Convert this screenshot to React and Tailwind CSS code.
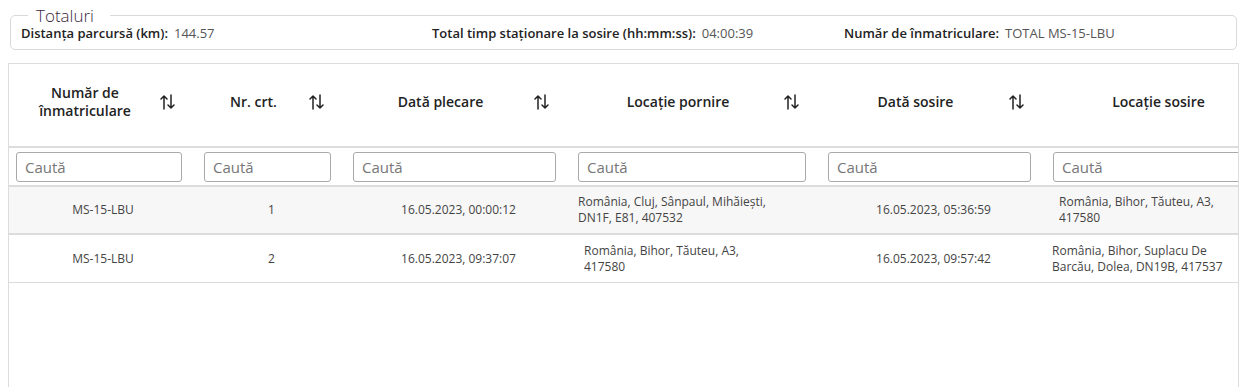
import React from "react";

const columns = [
  { label: "Număr de înmatriculare", width: "w-[188px]", sortable: true },
  { label: "Nr. crt.", width: "w-[149px]", sortable: true },
  { label: "Dată plecare", width: "w-[225px]", sortable: true },
  { label: "Locație pornire", width: "w-[250px]", sortable: true },
  { label: "Dată sosire", width: "w-[225px]", sortable: true },
  { label: "Locație sosire", width: "w-[225px]", sortable: false },
];

const rows = [
  {
    plate: "MS-15-LBU",
    nr: "1",
    start: "16.05.2023, 00:00:12",
    from: "România, Cluj, Sânpaul, Mihăiești, DN1F, E81, 407532",
    fromPad: "pl-[7px]",
    end: "16.05.2023, 05:36:59",
    to: "România, Bihor, Tăuteu, A3, 417580",
    toPad: "pl-[13px]",
  },
  {
    plate: "MS-15-LBU",
    nr: "2",
    start: "16.05.2023, 09:37:07",
    from: "România, Bihor, Tăuteu, A3, 417580",
    fromPad: "pl-[13px]",
    end: "16.05.2023, 09:57:42",
    to: "România, Bihor, Suplacu De Barcău, Dolea, DN19B, 417537",
    toPad: "pl-[6px]",
  },
];

const SortIcon = () => (
  <svg width="15" height="16" viewBox="0 0 15 16" fill="none" stroke="#222" strokeWidth="1.5" strokeLinecap="round" strokeLinejoin="round">
    <path d="M4 15V2M1 5l3-3 3 3" />
    <path d="M11 1v13M8 11l3 3 3-3" />
  </svg>
);

const Totals = () => (
  <fieldset className="mx-[10px] mt-[7px] rounded-[5px] border border-[#d9d9d9] px-[10px] pb-[7px] pt-0">
    <legend className="ml-[7px] pl-[8px] pr-[16px] text-[17px] font-light leading-[17px] text-[#3d1f40]">Totaluri</legend>
    <div className="grid grid-cols-[411px_412px_1fr] pt-[1px] text-[13px] leading-[17px]">
      <div>
        <span className="font-semibold text-[#222]">Distanța parcursă (km):</span>
        <span className="ml-[6px] text-[#555]">144.57</span>
      </div>
      <div>
        <span className="font-semibold text-[#222]">Total timp staționare la sosire (hh:mm:ss):</span>
        <span className="ml-[6px] text-[#555]">04:00:39</span>
      </div>
      <div>
        <span className="font-semibold text-[#222]">Număr de înmatriculare:</span>
        <span className="ml-[6px] text-[#555]">TOTAL MS-15-LBU</span>
      </div>
    </div>
  </fieldset>
);

const Cell = ({ width, children, className = "" }) => (
  <div className={`${width} shrink-0 px-[7px] ${className}`}>{children}</div>
);

export default function App() {
  return (
    <div className="h-[387px] overflow-hidden bg-white font-['Open_Sans',sans-serif] text-[#333]">
      <Totals />

      <div className="mx-[8px] mt-[13px] h-[400px] overflow-hidden border border-[#dcdcdc] bg-white">
        {/* header */}
        <div className="flex h-[84px] items-center border-b-2 border-[#dcdcdc] pb-[6px]">
          {columns.map((col) => (
            <Cell key={col.label} width={col.width} className="flex items-center">
              <span className="flex-1 text-center text-[14px] font-semibold leading-[18px] text-[#222]">
                {col.label === "Număr de înmatriculare" ? (
                  <>
                    Număr de
                    <br />
                    înmatriculare
                  </>
                ) : (
                  col.label
                )}
              </span>
              {col.sortable && (
                <span className="mr-[15px] ml-[6px]">
                  <SortIcon />
                </span>
              )}
            </Cell>
          ))}
        </div>

        {/* filters */}
        <div className="flex h-[39px] items-center border-b-2 border-[#dcdcdc]">
          {columns.map((col) => (
            <Cell key={col.label} width={col.width} className="pr-[15px]">
              <input
                type="text"
                placeholder="Caută"
                className="h-[30px] w-full rounded-[3px] border border-[#a9a9a9] px-[8px] text-[15px] text-[#333] placeholder:text-[#777] focus:outline-none"
              />
            </Cell>
          ))}
        </div>

        {/* rows */}
        {rows.map((row, i) => (
          <div
            key={row.nr}
            className={`flex h-[48px] items-center text-[12px] leading-[16px] text-[#444] ${
              i === 0 ? "bg-[#f7f7f7] border-b-2" : "border-b"
            } border-[#dcdcdc]`}
          >
            <Cell width={columns[0].width} className="text-center">{row.plate}</Cell>
            <Cell width={columns[1].width} className="text-center">{row.nr}</Cell>
            <Cell width={columns[2].width} className="text-center">{row.start}</Cell>
            <Cell width={columns[3].width} className={row.fromPad}>
              <div className="max-w-[192px]">{row.from}</div>
            </Cell>
            <Cell width={columns[4].width} className="text-center">{row.end}</Cell>
            <Cell width={columns[5].width} className={row.toPad}>
              <div className="max-w-[192px]">{row.to}</div>
            </Cell>
          </div>
        ))}
      </div>
    </div>
  );
}
